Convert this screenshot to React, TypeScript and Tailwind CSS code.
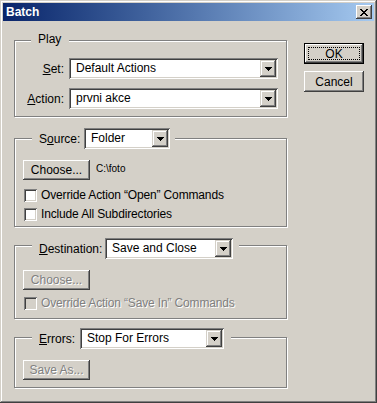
import type { ReactNode } from "react";

// classic 3D bevels
const RAISED =
  "shadow-[inset_-1px_-1px_#404040,inset_1px_1px_#ffffff,inset_-2px_-2px_#808080,inset_2px_2px_#d4d0c8]";
const ARROW_BEVEL =
  "shadow-[inset_-1px_-1px_#404040,inset_1px_1px_#d4d0c8,inset_-2px_-2px_#808080,inset_2px_2px_#ffffff]";
const SUNKEN =
  "shadow-[inset_1px_1px_#808080,inset_-1px_-1px_#ffffff,inset_2px_2px_#404040,inset_-2px_-2px_#d4d0c8]";
const DISABLED_TEXT = "text-[#808080] [text-shadow:1px_1px_0_#ffffff]";

interface ButtonProps {
  children: ReactNode;
  disabled?: boolean;
  isDefault?: boolean;
  className?: string;
}

function Button({ children, disabled, isDefault, className = "" }: ButtonProps) {
  if (isDefault) {
    return (
      <div className={`border border-black ${className}`}>
        <div className={`h-full p-[3px] ${RAISED}`}>
          <div className="h-full flex items-center justify-center border border-dotted border-black">
            {children}
          </div>
        </div>
      </div>
    );
  }
  return (
    <div
      className={`flex items-center justify-center bg-[#d4d0c8] ${RAISED} ${
        disabled ? DISABLED_TEXT : ""
      } ${className}`}
    >
      {children}
    </div>
  );
}

function Select({ value, className = "" }: { value: string; className?: string }) {
  return (
    <div className={`h-[21px] flex bg-white p-[2px] ${SUNKEN} ${className}`}>
      <div className="flex-1 pl-[5px] leading-[17px] whitespace-nowrap overflow-hidden">{value}</div>
      <div className={`w-[16px] flex items-center justify-center bg-[#d4d0c8] ${ARROW_BEVEL}`}>
        <svg width="7" height="4" viewBox="0 0 7 4" shapeRendering="crispEdges">
          <path d="M0 0h7v1H0zM1 1h5v1H1zM2 2h3v1H2zM3 3h1v1H3z" fill="#000" />
        </svg>
      </div>
    </div>
  );
}

function Checkbox({ label, disabled }: { label: string; disabled?: boolean }) {
  return (
    <div className="flex items-center h-[13px] pl-[1px]">
      <div className={`w-[13px] h-[13px] ${disabled ? "bg-[#d4d0c8]" : "bg-white"} ${SUNKEN}`} />
      <span
        className={`ml-[4px] leading-[13px] whitespace-nowrap tracking-[-0.15px] ${
          disabled ? DISABLED_TEXT : ""
        }`}
      >
        {label}
      </span>
    </div>
  );
}

interface GroupProps {
  legend: ReactNode;
  legendClass: string;
  className: string;
  children: ReactNode;
}

function Group({ legend, legendClass, className, children }: GroupProps) {
  return (
    <div
      className={`relative border border-[#808080] shadow-[inset_1px_1px_#ffffff,1px_1px_#ffffff] ${className}`}
    >
      {/* legend sits over the etched top line */}
      <div className={`absolute flex items-center bg-[#d4d0c8] ${legendClass}`}>{legend}</div>
      {children}
    </div>
  );
}

function TitleBar() {
  return (
    <div className="h-[18px] flex items-center justify-between bg-linear-to-r from-[#0a246a] to-[#a6caf0] pl-[3px] pr-[2px]">
      <span className="text-white font-bold text-[12px] leading-none">Batch</span>
      <div className={`w-[16px] h-[14px] flex items-center justify-center bg-[#d4d0c8] ${RAISED}`}>
        <svg width="8" height="7" viewBox="0 0 8 7" shapeRendering="crispEdges">
          <path
            d="M0 0h2v1H0zM6 0h2v1H6zM1 1h2v1H1zM5 1h2v1H5zM2 2h4v1H2zM3 3h2v1H3zM2 4h4v1H2zM1 5h2v1H1zM5 5h2v1H5zM0 6h2v1H0zM6 6h2v1H6z"
            fill="#000"
          />
        </svg>
      </div>
    </div>
  );
}

export default function App() {
  return (
    <div className="w-[377px] h-[403px] flex flex-col p-[3px] bg-[#d4d0c8] text-black text-[12px] font-['Liberation_Sans',Arial,sans-serif] shadow-[inset_-1px_-1px_#404040,inset_1px_1px_#d4d0c8,inset_-2px_-2px_#808080,inset_2px_2px_#ffffff]">
      <TitleBar />

      <div className="flex pl-[11px]">
        {/* Left column: group boxes */}
        <div className="w-[273px] flex flex-col">
          <Group
            className="mt-[19px] h-[77px] pt-[17px] flex flex-col gap-[9px]"
            legendClass="-top-[9px] left-[16px] h-[14px] pl-[7px] pr-[8px]"
            legend={<span className="leading-[14px]">Play</span>}
          >
            <div className="flex items-center">
              <span className="w-[49px] text-right">
                <u>S</u>et:
              </span>
              <Select value="Default Actions" className="ml-[5px] w-[209px]" />
            </div>
            <div className="flex items-center">
              <span className="w-[49px] text-right">
                <u>A</u>ction:
              </span>
              <Select value="prvni akce" className="ml-[5px] w-[209px]" />
            </div>
          </Group>

          <Group
            className="mt-[21px] h-[89px] pt-[21px] pl-[8px]"
            legendClass="-top-[11px] left-[17px] pl-[7px] pr-[5px]"
            legend={
              <>
                <span className="w-[45px]">
                  S<u>o</u>urce:
                </span>
                <Select value="Folder" className="w-[86px]" />
              </>
            }
          >
            <div className="flex items-center">
              <Button className="w-[67px] h-[20px]">Choose...</Button>
              <span className="ml-[6px] text-[10px] leading-none -mt-[3px]">C:\foto</span>
            </div>
            <div className="mt-[9px]">
              <Checkbox label="Override Action “Open” Commands" />
            </div>
            <div className="mt-[6px]">
              <Checkbox label="Include All Subdirectories" />
            </div>
          </Group>

          <Group
            className="mt-[18px] h-[74px] pt-[24px] pl-[8px]"
            legendClass="-top-[8px] left-[17px] pl-[7px] pr-[6px]"
            legend={
              <>
                <span className="w-[66px]">
                  <u>D</u>estination:
                </span>
                <Select value="Save and Close" className="w-[128px]" />
              </>
            }
          >
            <Button disabled className="w-[67px] h-[20px]">
              Choose...
            </Button>
            <div className="mt-[7px]">
              <Checkbox disabled label="Override Action “Save In” Commands" />
            </div>
          </Group>

          <Group
            className="mt-[18px] h-[51px] pt-[22px] pl-[8px]"
            legendClass="-top-[10px] left-[17px] pl-[7px] pr-[7px]"
            legend={
              <>
                <span className="w-[41px]">
                  <u>E</u>rrors:
                </span>
                <Select value="Stop For Errors" className="w-[144px]" />
              </>
            }
          >
            <Button disabled className="w-[67px] h-[20px]">
              Save As...
            </Button>
          </Group>
        </div>

        {/* Right column: dialog buttons */}
        <div className="ml-[17px] mt-[22px] flex flex-col gap-[7px]">
          <Button isDefault className="w-[60px] h-[21px]">
            OK
          </Button>
          <Button className="w-[60px] h-[21px]">Cancel</Button>
        </div>
      </div>
    </div>
  );
}
